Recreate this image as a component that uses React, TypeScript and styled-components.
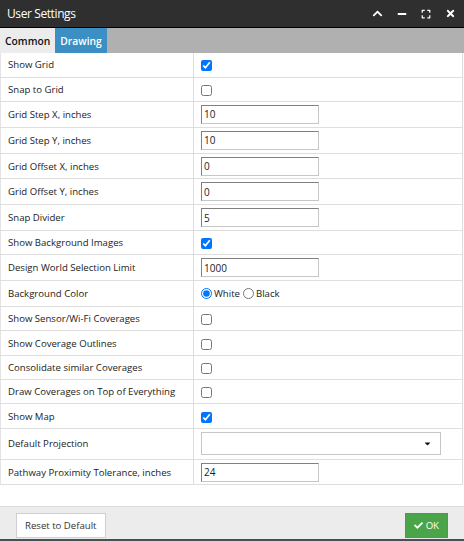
import * as React from "react";
import styled, { createGlobalStyle } from "styled-components";
import { FaChevronUp, FaMinus, FaExpand, FaTimes, FaCheck, FaCaretDown } from "react-icons/fa";

const GlobalStyle = createGlobalStyle`
  html, body {
    margin: 0;
    padding: 0;
    background: #4a4f55;
    font-family: "Open Sans", "Liberation Sans", sans-serif;
  }
`;

const Dialog = styled.div`
  width: 464px;
  height: 539px;
  background: #fff;
  display: flex;
  flex-direction: column;
  position: relative;
`;

const TitleBar = styled.div`
  height: 27px;
  background: #2f2f2f;
  border-bottom: 1px solid #000;
  display: flex;
  align-items: center;
  padding: 0 8px 0 7px;
  color: #fff;
`;

const Title = styled.div`
  flex: 1;
  font-size: 12px;
  letter-spacing: -0.4px;
`;

const TitleIcons = styled.div`
  display: flex;
  align-items: center;
  gap: 14px;
  font-size: 11px;
  svg {
    display: block;
  }
`;

const Tabs = styled.div`
  height: 25px;
  background: #b0b0b0;
  display: flex;
`;

const Tab = styled.div<{ $active?: boolean }>`
  display: flex;
  align-items: center;
  padding: 0 5px 0 5px;
  font-size: 10.3px;
  font-weight: 600;
  background: ${(p) => (p.$active ? "#3b8fc2" : "#ececec")};
  color: ${(p) => (p.$active ? "#fff" : "#111")};
`;

const Body = styled.div`
  flex: 1;
`;

const Table = styled.table`
  width: 463px;
  border-collapse: collapse;
  font-size: 9.6px;
  color: #222;
`;

const Row = styled.tr<{ $h: number }>`
  height: ${(p) => p.$h}px;
  td {
    border: 1px solid #dedede;
    border-top: none;
    vertical-align: middle;
  }
  td:first-child {
    border-left: 1px solid #e4e4e4;
  }
`;

const Label = styled.td`
  width: 179px;
  padding: 0 6px 0 7px;
`;

const Value = styled.td`
  padding: 0 7px;
`;

const Check = styled.input.attrs({ type: "checkbox" })`
  width: 11px;
  height: 11px;
  margin: 2px 0 0 0;
  display: block;
`;

const TextInput = styled.input.attrs({ type: "text" })`
  box-sizing: border-box;
  width: 118px;
  height: 19px;
  padding: 0 2px;
  font: inherit;
  font-size: 10px;
  color: #222;
  border: 1px solid #c6c6c6;
  border-top-color: #808080;
  border-left-color: #808080;
  display: block;
  outline: none;
`;

const Radios = styled.label`
  display: flex;
  align-items: center;
  gap: 1px;
  input {
    width: 11px;
    height: 11px;
    margin: 0 1px 0 0;
  }
  input + input {
    margin-left: 2px;
  }
`;

const Select = styled.div`
  box-sizing: border-box;
  width: 240px;
  height: 23px;
  border: 1px solid #c6c6c6;
  display: flex;
  align-items: center;
  justify-content: flex-end;
  padding-right: 8px;
  color: #111;
`;

const Footer = styled.div`
  height: 32px;
  background: #ececec;
  border-top: 1px solid #dcdcdc;
  display: flex;
  align-items: center;
  justify-content: space-between;
  padding: 0 16px;
  position: relative;
`;

const Button = styled.button<{ $primary?: boolean }>`
  height: 25px;
  font-family: inherit;
  font-size: 9.6px;
  padding: 0 ${(p) => (p.$primary ? "8px" : "8px")};
  border: 1px solid ${(p) => (p.$primary ? "#45a045" : "#cfcfcf")};
  background: ${(p) => (p.$primary ? "#4aa54a" : "#fff")};
  color: ${(p) => (p.$primary ? "#fff" : "#333")};
  display: flex;
  align-items: center;
  gap: 3px;
  margin-top: 4px;
`;

const Grip = styled.div`
  position: absolute;
  right: 1px;
  bottom: 1px;
  width: 8px;
  height: 8px;
`;

type Field =
  | { label: string; kind: "check"; checked: boolean }
  | { label: string; kind: "text"; value: string }
  | { label: string; kind: "radio" }
  | { label: string; kind: "select" };

const fields: Field[] = [
  { label: "Show Grid", kind: "check", checked: true },
  { label: "Snap to Grid", kind: "check", checked: false },
  { label: "Grid Step X, inches", kind: "text", value: "10" },
  { label: "Grid Step Y, inches", kind: "text", value: "10" },
  { label: "Grid Offset X, inches", kind: "text", value: "0" },
  { label: "Grid Offset Y, inches", kind: "text", value: "0" },
  { label: "Snap Divider", kind: "text", value: "5" },
  { label: "Show Background Images", kind: "check", checked: true },
  { label: "Design World Selection Limit", kind: "text", value: "1000" },
  { label: "Background Color", kind: "radio" },
  { label: "Show Sensor/Wi-Fi Coverages", kind: "check", checked: false },
  { label: "Show Coverage Outlines", kind: "check", checked: false },
  { label: "Consolidate similar Coverages", kind: "check", checked: false },
  { label: "Draw Coverages on Top of Everything", kind: "check", checked: false },
  { label: "Show Map", kind: "check", checked: true },
  { label: "Default Projection", kind: "select" },
  { label: "Pathway Proximity Tolerance, inches", kind: "text", value: "24" },
];

function heightOf(f: Field) {
  if (f.kind === "check") return 24.3;
  if (f.kind === "radio") return 26;
  if (f.kind === "select") return 31;
  return 25.8;
}

function renderValue(f: Field) {
  switch (f.kind) {
    case "check":
      return <Check defaultChecked={f.checked} />;
    case "text":
      return <TextInput defaultValue={f.value} />;
    case "radio":
      return (
        <Radios>
          <input type="radio" name="bg" defaultChecked />
          White
          <input type="radio" name="bg" />
          Black
        </Radios>
      );
    case "select":
      return (
        <Select>
          <FaCaretDown size={9} />
        </Select>
      );
  }
}

export default function App() {
  return (
    <>
      <GlobalStyle />
      <Dialog>
        <TitleBar>
          <Title>User Settings</Title>
          <TitleIcons>
            <FaChevronUp size={11} />
            <FaMinus size={10} />
            <FaExpand size={10} />
            <FaTimes size={11} />
          </TitleIcons>
        </TitleBar>
        <Tabs>
          <Tab>Common</Tab>
          <Tab $active>Drawing</Tab>
        </Tabs>
        <Body>
          <Table>
            <tbody>
              {fields.map((f) => (
                <Row key={f.label} $h={heightOf(f)}>
                  <Label>{f.label}</Label>
                  <Value>{renderValue(f)}</Value>
                </Row>
              ))}
            </tbody>
          </Table>
        </Body>
        <Footer>
          <Button>Reset to Default</Button>
          <Button $primary>
            <FaCheck size={9} />
            OK
          </Button>
          <Grip>
            <svg width="8" height="8" viewBox="0 0 8 8">
              <rect x="6" y="1" width="1" height="1" fill="#555" />
              <rect x="6" y="4" width="1" height="1" fill="#555" />
              <rect x="3" y="6" width="1" height="1" fill="#555" />
              <rect x="6" y="6" width="1" height="1" fill="#555" />
              <rect x="0" y="6" width="1" height="1" fill="#555" />
            </svg>
          </Grip>
        </Footer>
      </Dialog>
    </>
  );
}
